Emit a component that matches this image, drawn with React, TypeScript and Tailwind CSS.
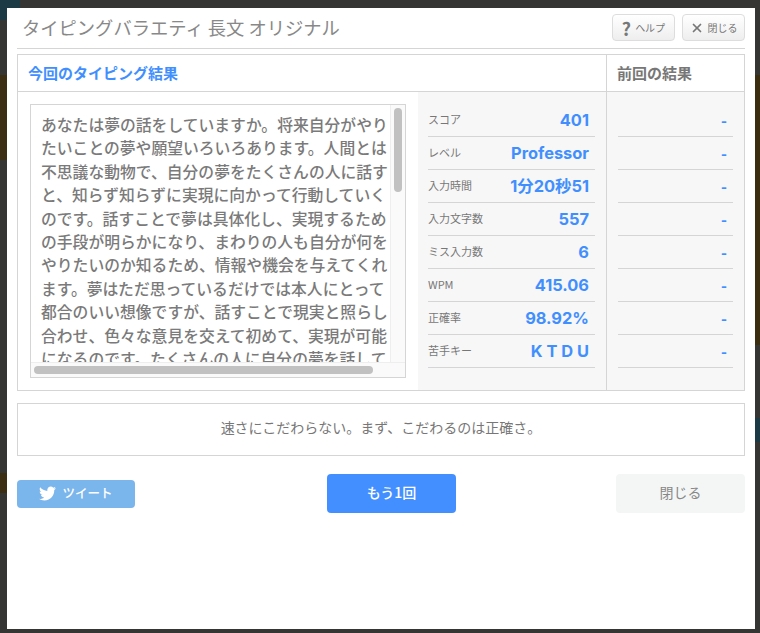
import { FaTwitter } from "react-icons/fa";
import { X } from "lucide-react";

const lines = [
  "あなたは夢の話をしていますか。将来自分がやり",
  "たいことの夢や願望いろいろあります。人間とは",
  "不思議な動物で、自分の夢をたくさんの人に話す",
  "と、知らず知らずに実現に向かって行動していく",
  "のです。話すことで夢は具体化し、実現するため",
  "の手段が明らかになり、まわりの人も自分が何を",
  "やりたいのか知るため、情報や機会を与えてくれ",
  "ます。夢はただ思っているだけでは本人にとって",
  "都合のいい想像ですが、話すことで現実と照らし",
  "合わせ、色々な意見を交えて初めて、実現が可能",
  "になるのです。たくさんの人に自分の夢を話して",
];

const stats = [
  { label: "スコア", value: "401" },
  { label: "レベル", value: "Professor" },
  { label: "入力時間", value: "1分20秒51" },
  { label: "入力文字数", value: "557" },
  { label: "ミス入力数", value: "6" },
  { label: "WPM", value: "415.06" },
  { label: "正確率", value: "98.92%" },
  { label: "苦手キー", value: "K T D U" },
];

const App = () => {
  return (
    <div className="relative h-[633px] w-[760px] overflow-hidden bg-[#353533] pl-[7px] pt-2 font-['Noto_Sans_CJK_JP',sans-serif]">
      {/* dimmed page behind the modal */}
      <div className="absolute left-0 top-0 h-5 w-5 bg-[#1b3a45]" />
      <div className="absolute left-0 top-[75px] h-[85px] w-[7px] bg-[#3b2e12]" />
      <div className="absolute left-0 top-[473px] h-5 w-[7px] bg-[#3b2e12]" />
      <div className="absolute right-0 top-[75px] h-[270px] w-[5px] bg-[#3a2d10]" />
      <div className="absolute right-0 top-[418px] h-6 w-[5px] bg-[#1b3a45]" />

      <div className="relative h-[621px] w-[748px] bg-white px-2.5 pt-1.5">
        <div className="flex h-[35px] items-start justify-between border-b border-[#d5d5d5]">
          <h1 className="pl-[5px] text-[18.3px] leading-[26px] text-[#888888]">タイピングバラエティ 長文 オリジナル</h1>
          <div className="flex gap-[7px]">
            <button className="flex h-[27px] w-[63px] items-center justify-center gap-1 rounded-sm border border-[#dddddd] bg-gradient-to-b from-white to-[#eeeeee] text-[10px] text-[#777777]">
              <span className="text-lg font-bold leading-none">?</span>
              ヘルプ
            </button>
            <button className="flex h-[27px] w-[63px] items-center justify-center gap-1 rounded-sm border border-[#dddddd] bg-gradient-to-b from-white to-[#eeeeee] text-[10px] text-[#777777]">
              <X className="h-3.5 w-3.5" strokeWidth={3} />
              閉じる
            </button>
          </div>
        </div>

        <div className="mt-[5px] h-[337px] border border-[#d5d5d5]">
          <div className="flex h-[37px] border-b border-[#d5d5d5] text-[15px] font-bold leading-9">
            <div className="w-[588px] pl-2.5 text-[#418fff]">今回のタイピング結果</div>
            <div className="flex-1 border-l border-[#d5d5d5] pl-2.5 text-[#777777]">前回の結果</div>
          </div>
          <div className="flex h-[298px]">
            <div className="w-[400px] pl-3 pt-3">
              <div className="h-[274px] w-[376px] overflow-hidden border border-[#d5d5d5]">
                <div className="flex h-[257px]">
                  <div className="flex-1 overflow-hidden pl-2.5 pt-2 text-[15.8px] font-medium leading-[23.4px] text-[#7a7a7a]">
                    {lines.map((line) => (
                      <div key={line} className="whitespace-nowrap">{line}</div>
                    ))}
                  </div>
                  <div className="w-[15px] border-l border-[#eeeeee] bg-[#fafafa] pl-[3px] pt-[3px]">
                    <div className="h-[84px] w-2 rounded bg-[#c1c1c1]" />
                  </div>
                </div>
                <div className="h-[15px] border-t border-[#eeeeee] bg-[#fafafa] pl-[3px] pt-[3px]">
                  <div className="h-2 w-[339px] rounded bg-[#c1c1c1]" />
                </div>
              </div>
            </div>
            <div className="w-[188px] bg-[#f7f7f7] pl-2.5 pr-[11px] pt-3">
              {stats.map((s) => (
                <div key={s.label} className="flex h-[33px] items-center justify-between border-b border-[#d5d5d5] pr-1.5">
                  <span className="mb-0.5 text-[11px] text-[#777777]">{s.label}</span>
                  <span className="font-['Inter','Noto_Sans_CJK_JP',sans-serif] text-[16.4px] font-bold text-[#418fff]">{s.value}</span>
                </div>
              ))}
            </div>
            <div className="flex-1 border-l border-[#d5d5d5] bg-[#f7f7f7] px-[11px] pt-3">
              {stats.map((s) => (
                <div key={s.label} className="flex h-[33px] items-center justify-end border-b border-[#d5d5d5] pr-1.5 text-base font-bold text-[#418fff]">
                  -
                </div>
              ))}
            </div>
          </div>
        </div>

        <div className="mt-3 flex h-[53px] items-center justify-center border border-[#d5d5d5] pb-1.5 text-sm text-[#777777]">
          速さにこだわらない。まず、こだわるのは正確さ。
        </div>

        <div className="mt-[18px] flex items-start">
          <button className="mt-1.5 flex h-7 w-[118px] items-center justify-center gap-1.5 rounded-sm bg-[#7ab5ec] pb-0.5 text-[12.5px] font-medium text-white">
            <FaTwitter className="h-[17px] w-[17px]" />
            ツイート
          </button>
          <button className="ml-[192px] h-[39px] w-[129px] rounded-sm bg-[#448fff] pb-1 text-sm font-medium text-white">もう1回</button>
          <button className="ml-auto h-[39px] w-[129px] rounded-sm bg-[#f4f6f6] pb-1 text-sm text-[#888888]">閉じる</button>
        </div>
      </div>
    </div>
  );
};

export default App;
